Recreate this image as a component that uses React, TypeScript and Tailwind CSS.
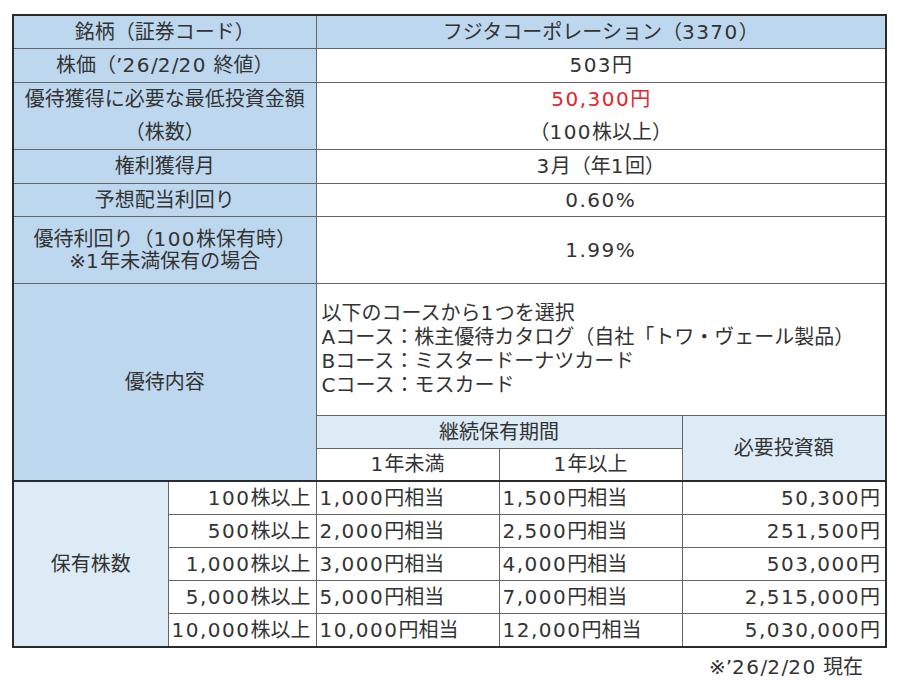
import React from "react";

// numbers in the source sheet are set wide, so give digit runs a bit of tracking
function Txt({ s }: { s: string }) {
  const parts = s.split(/([0-9][0-9,.%]*)/);
  return (
    <>
      {parts.map((p, i) =>
        /^[0-9]/.test(p) ? (
          <span key={i} className="tracking-[1.5px]">
            {p}
          </span>
        ) : (
          <React.Fragment key={i}>{p}</React.Fragment>
        )
      )}
    </>
  );
}

const head = "bg-[#bdd7ee]";
const sub = "bg-[#ddebf7]";
const cell = "border border-[#666] p-0 align-middle";
const thick = "border-t-2 border-t-[#2b2b2b]";

const holdRows = [
  { shares: "100株以上", under: "1,000円相当", over: "1,500円相当", need: "50,300円" },
  { shares: "500株以上", under: "2,000円相当", over: "2,500円相当", need: "251,500円" },
  { shares: "1,000株以上", under: "3,000円相当", over: "4,000円相当", need: "503,000円" },
  { shares: "5,000株以上", under: "5,000円相当", over: "7,000円相当", need: "2,515,000円" },
  { shares: "10,000株以上", under: "10,000円相当", over: "12,000円相当", need: "5,030,000円" },
];

export default function App() {
  return (
    <div className="min-h-[686px] w-[900px] bg-white text-[20px] text-[#333] font-['DejaVu_Sans','Noto_Sans_CJK_JP',sans-serif]">
      <div className="pl-[12px] pt-[14px]">
        <table className="table-fixed border-collapse border-2 border-[#2b2b2b] w-[873px]">
          <colgroup>
            <col className="w-[155px]" />
            <col className="w-[148px]" />
            <col className="w-[183px]" />
            <col className="w-[183px]" />
            <col className="w-[204px]" />
          </colgroup>
          <tbody>
            <tr>
              <td colSpan={2} className={`${cell} ${head} h-[33px] text-center`}>
                <Txt s="銘柄（証券コード）" />
              </td>
              <td colSpan={3} className={`${cell} ${head} text-center`}>
                <Txt s="フジタコーポレーション（3370）" />
              </td>
            </tr>
            <tr>
              <td colSpan={2} className={`${cell} ${head} h-[34px] text-center`}>
                <Txt s="株価（’26/2/20 終値）" />
              </td>
              <td colSpan={3} className={`${cell} text-center`}>
                <Txt s="503円" />
              </td>
            </tr>
            <tr>
              <td colSpan={2} className={`${cell} ${head} h-[65px] text-center leading-[33px]`}>
                <div>優待獲得に必要な最低投資金額</div>
                <div>（株数）</div>
              </td>
              <td colSpan={3} className={`${cell} text-center leading-[33px]`}>
                <div className="text-[#e3242b]">
                  <Txt s="50,300円" />
                </div>
                <div>
                  <Txt s="（100株以上）" />
                </div>
              </td>
            </tr>
            <tr>
              <td colSpan={2} className={`${cell} ${head} h-[34px] text-center`}>
                権利獲得月
              </td>
              <td colSpan={3} className={`${cell} text-center`}>
                <Txt s="3月（年1回）" />
              </td>
            </tr>
            <tr>
              <td colSpan={2} className={`${cell} ${head} h-[33px] text-center`}>
                予想配当利回り
              </td>
              <td colSpan={3} className={`${cell} text-center`}>
                <Txt s="0.60%" />
              </td>
            </tr>
            <tr>
              <td colSpan={2} className={`${cell} ${head} h-[67px] text-center leading-[22px]`}>
                <div>
                  <Txt s="優待利回り（100株保有時）" />
                </div>
                <div>
                  <Txt s="※1年未満保有の場合" />
                </div>
              </td>
              <td colSpan={3} className={`${cell} text-center`}>
                <Txt s="1.99%" />
              </td>
            </tr>

            {/* 優待内容 */}
            <tr>
              <td rowSpan={3} colSpan={2} className={`${cell} ${head} text-center`}>
                優待内容
              </td>
              <td colSpan={3} className={`${cell} h-[132px] pl-[5px] leading-[24px]`}>
                <div>
                  <Txt s="以下のコースから1つを選択" />
                </div>
                <div>Aコース：株主優待カタログ（自社「トワ・ヴェール製品）</div>
                <div>Bコース：ミスタードーナツカード</div>
                <div>Cコース：モスカード</div>
              </td>
            </tr>
            <tr>
              <td colSpan={2} className={`${cell} ${sub} h-[33px] text-center`}>
                継続保有期間
              </td>
              <td rowSpan={2} className={`${cell} ${sub} text-center`}>
                必要投資額
              </td>
            </tr>
            <tr>
              <td className={`${cell} h-[33px] text-center`}>
                <Txt s="1年未満" />
              </td>
              <td className={`${cell} text-center`}>
                <Txt s="1年以上" />
              </td>
            </tr>

            {holdRows.map((r, i) => (
              <tr key={r.shares}>
                {i === 0 && (
                  <td rowSpan={5} className={`${cell} ${sub} ${thick} text-center`}>
                    保有株数
                  </td>
                )}
                <td className={`${cell} ${i === 0 ? thick : ""} h-[33.2px] text-right pr-[5px] whitespace-nowrap`}>
                  <Txt s={r.shares} />
                </td>
                <td className={`${cell} ${i === 0 ? thick : ""} pl-[3px] whitespace-nowrap`}>
                  <Txt s={r.under} />
                </td>
                <td className={`${cell} ${i === 0 ? thick : ""} pl-[3px] whitespace-nowrap`}>
                  <Txt s={r.over} />
                </td>
                <td className={`${cell} ${i === 0 ? thick : ""} text-right pr-[5px] whitespace-nowrap`}>
                  <Txt s={r.need} />
                </td>
              </tr>
            ))}
          </tbody>
        </table>
        <div className="w-[873px] pr-[22px] pt-[4px] text-right">
          <Txt s="※’26/2/20 現在" />
        </div>
      </div>
    </div>
  );
}
